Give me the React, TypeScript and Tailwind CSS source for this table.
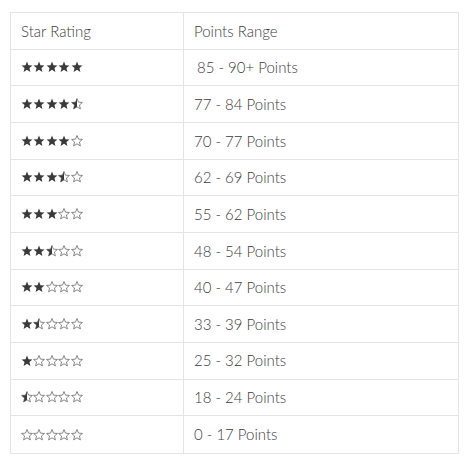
import React from "react";

type S = "f" | "h" | "e";

function Star({ kind }: { kind: S }) {
  const d =
    "M6 0.5 L7.5 4.15 L11.45 4.45 L8.45 7 L9.4 10.9 L6 8.8 L2.6 10.9 L3.55 7 L0.55 4.45 L4.5 4.15 Z";
  return (
    <svg width="12" height="12" viewBox="0 0 12 12" className="block">
      {kind === "f" && <path d={d} fill="#3a3a3a" />}
      {kind === "e" && (
        <path d={d} fill="none" stroke="#6a6a6a" strokeWidth="0.8" strokeLinejoin="round" />
      )}
      {kind === "h" && (
        <>
          <clipPath id="lh">
            <rect x="0" y="0" width="6" height="12" />
          </clipPath>
          <path d={d} fill="none" stroke="#6a6a6a" strokeWidth="0.8" strokeLinejoin="round" />
          <path d={d} fill="#3a3a3a" clipPath="url(#lh)" />
        </>
      )}
    </svg>
  );
}

const rows: { stars: S[]; pts: string; indent?: boolean }[] = [
  { stars: ["f", "f", "f", "f", "f"], pts: "85 - 90+ Points", indent: true },
  { stars: ["f", "f", "f", "f", "h"], pts: "77 - 84 Points" },
  { stars: ["f", "f", "f", "f", "e"], pts: "70 - 77 Points" },
  { stars: ["f", "f", "f", "h", "e"], pts: "62 - 69 Points" },
  { stars: ["f", "f", "f", "e", "e"], pts: "55 - 62 Points" },
  { stars: ["f", "f", "h", "e", "e"], pts: "48 - 54 Points" },
  { stars: ["f", "f", "e", "e", "e"], pts: "40 - 47 Points" },
  { stars: ["f", "h", "e", "e", "e"], pts: "33 - 39 Points" },
  { stars: ["f", "e", "e", "e", "e"], pts: "25 - 32 Points" },
  { stars: ["h", "e", "e", "e", "e"], pts: "18 - 24 Points" },
  { stars: ["e", "e", "e", "e", "e"], pts: "0 - 17 Points" },
];

export default function App() {
  return (
    <div
      className="w-[468px] h-[463px] bg-white pt-[12px] pl-[10px]"
      style={{ fontFamily: "Lato, 'Noto Sans', sans-serif" }}
    >
      <div className="w-[449px] border border-[#e4e4e4] text-[15px] font-light text-[#3c3c3c]">
        <div className="flex h-[36.67px] border-b border-[#e4e4e4]">
          <div className="w-[173px] border-r border-[#e4e4e4] flex items-center pl-[10px]">
            Star Rating
          </div>
          <div className="flex-1 flex items-center pl-[10px]">Points Range</div>
        </div>
        {rows.map((r, i) => (
          <div
            key={i}
            className={
              i === rows.length - 1
                ? "flex h-[36.67px]"
                : "flex h-[36.67px] border-b border-[#e4e4e4]"
            }
          >
            <div className="w-[173px] border-r border-[#e4e4e4] flex items-center pl-[10px] gap-[0.4px]">
              {r.stars.map((s, j) => (
                <Star key={j} kind={s} />
              ))}
            </div>
            <div className={r.indent ? "flex-1 flex items-center pl-[13px]" : "flex-1 flex items-center pl-[10px]"}>
              {r.pts}
            </div>
          </div>
        ))}
      </div>
    </div>
  );
}
